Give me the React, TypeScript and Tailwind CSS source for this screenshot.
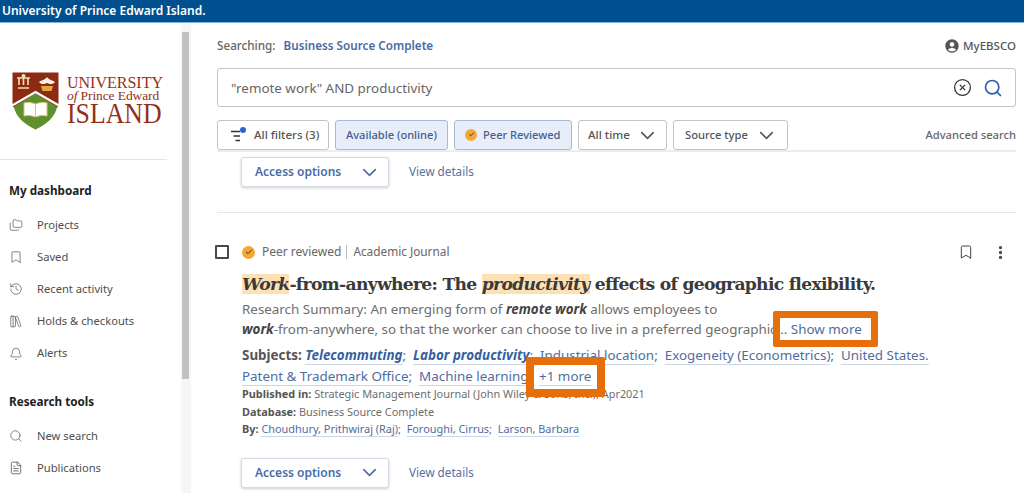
import { Bookmark, Check, ChevronDown, CircleX, EllipsisVertical, FileText, Folders, Bell, History, LibraryBig, Search } from 'lucide-react'
import { MdAccountCircle } from 'react-icons/md'
import type { ReactNode } from 'react'

const sans = { fontFamily: '"Noto Sans", sans-serif' }

function Logo() {
  return (
    <div className="flex items-center gap-[8px] pl-[12px]">
      <svg width="47" height="58" viewBox="0 0 47 58" className="shrink-0">
        <path d="M0.5 0.5H46.5V34L23.5 57.5L0.5 34Z" fill="#8c2a14" />
        <path d="M2 34.5L23.5 21.5L45 34.5C44 44 34 53 23.5 57.5C13 53 3 44 2 34.5Z" fill="#5f8f2e" />
        <path d="M0 33.5L23.5 20L47 33.5" fill="none" stroke="#fff" strokeWidth="2.2" />
        <path d="M12 31C16 30 20 30.5 23.5 32C27 30.5 31 30 35 31V44C31 43 27 43.5 23.5 45C20 43.5 16 43 12 44Z" fill="#fff" stroke="#d9c77a" strokeWidth="1" />
        <path d="M23.5 32V45" stroke="#d9c77a" />
        <path d="M5 6H18M7 6V13M11.5 6V13M16 6V13M6 16H17" stroke="#f4e3b3" strokeWidth="1.6" fill="none" />
        <circle cx="11.5" cy="4" r="2" fill="#f4e3b3" />
        <path d="M35 5C33 8 30 8 27 10C29 13 33 12 35 11C37 12 41 13 43 10C40 8 37 8 35 5Z" fill="#f7efe0" />
        <path d="M29 14H41L39.5 19H30.5Z" fill="#e0a93b" />
      </svg>
      <div className="flex flex-col items-start font-['Liberation_Serif',serif] text-[#93301c]">
        <span className="text-[16px] leading-[14px]">UNIVERSITY</span>
        <span className="text-[13.5px] leading-[12px] whitespace-nowrap tracking-[-0.1px]">
          <i>of</i> Prince Edward
        </span>
        <span className="-mt-[1px] mb-[3px] origin-top scale-y-[1.15] text-[25.8px] leading-[22px]">ISLAND</span>
      </div>
    </div>
  )
}

function NavItem({ icon, label }: { icon: ReactNode; label: string }) {
  return (
    <div className="flex h-[32.2px] items-center gap-[14px] pl-[9px] text-[11.2px] text-[#4e4e4e]">
      <span className="flex w-[14px] justify-center text-[#555]">{icon}</span>
      {label}
    </div>
  )
}

function Sidebar() {
  return (
    <aside className="flex w-[181px] shrink-0 flex-col">
      <div className="mr-[14px] h-[137px] border-b border-[#e5e5e5] pt-[49px]">
        <Logo />
      </div>
      <h3 className="mt-[22px] mb-[11px] pl-[9px] text-[11.7px] leading-[16px] font-bold text-[#222]">My dashboard</h3>
      <NavItem icon={<Folders size={16} strokeWidth={1.2} />} label="Projects" />
      <NavItem icon={<Bookmark size={14} strokeWidth={1.2} />} label="Saved" />
      <NavItem icon={<History size={14} strokeWidth={1.2} />} label="Recent activity" />
      <NavItem icon={<LibraryBig size={15} strokeWidth={1.2} />} label="Holds & checkouts" />
      <NavItem icon={<Bell size={14} strokeWidth={1.2} />} label="Alerts" />
      <h3 className="mt-[23px] mb-[11px] pl-[9px] text-[11.7px] leading-[16px] font-bold text-[#222]">Research tools</h3>
      <NavItem icon={<Search size={14} strokeWidth={1.2} />} label="New search" />
      <NavItem icon={<FileText size={14} strokeWidth={1.4} />} label="Publications" />
    </aside>
  )
}

function Scrollbar() {
  return (
    <div className="flex w-[10px] shrink-0 flex-col bg-[#f6f6f6] pl-[1px]">
      <div className="h-[9px]" />
      <div className="h-[347px] w-[7px] bg-[#c2c2c2]" />
    </div>
  )
}

function Chip({ children, active, width }: { children: ReactNode; active?: boolean; width: string }) {
  return (
    <div
      className={
        active
          ? `flex h-[30px] items-center rounded-[3px] border border-[#a9b8d4] bg-[#e8eef9] text-[11.1px] text-[#41608f] ${width}`
          : `flex h-[30px] items-center rounded-[3px] border border-[#c4c4c4] bg-white text-[#555] ${width}`
      }
    >
      {children}
    </div>
  )
}

function PeerBadge({ size }: { size: number }) {
  return (
    <span className="flex shrink-0 items-center justify-center rounded-full bg-[#f4a936] text-[#333]" style={{ width: size, height: size }}>
      <Check size={size - 5} strokeWidth={3} />
    </span>
  )
}

function AccessRow() {
  return (
    <div className="flex items-center">
      <div className="flex h-[30px] w-[148px] items-center justify-between rounded-[3px] border border-[#d5dbe6] bg-white pr-[7px] pl-[13px] text-[12px] font-semibold text-[#4a6ba5] shadow-[0_1px_3px_rgba(0,0,0,0.2)]">
        Access options
        <ChevronDown size={23} strokeWidth={1.6} />
      </div>
      <span className="ml-[20px] text-[11.7px] text-[#56719f]">View details</span>
    </div>
  )
}

function SubjectLink({ children, bold }: { children: ReactNode; bold?: boolean }) {
  return (
    <span className={bold ? 'border-b border-[#ccd5e5] font-bold text-[#35609f] italic' : 'border-b border-[#ccd5e5] text-[#4f6d9f]'}>
      {children}
    </span>
  )
}

function Result() {
  return (
    <article className="relative">
      <div className="-ml-[2px] flex items-center">
        <span className="h-[14px] w-[14px] rounded-[1px] border-2 border-[#4a4a4a]" />
        <span className="ml-[13px]">
          <PeerBadge size={13} />
        </span>
        <span className="ml-[7px] text-[12px] text-[#666]">Peer reviewed</span>
        <span className="mx-[5px] h-[14px] w-px bg-[#bbb]" />
        <span className="ml-[1px] text-[11.8px] text-[#666]">Academic Journal</span>
        <Bookmark size={16} strokeWidth={1.5} className="mr-[18px] ml-auto text-[#444]" />
        <EllipsisVertical size={17} strokeWidth={2.6} className="mr-[7px] text-[#444]" />
      </div>
      <div className="pl-[25px]">
        <h2 className="mt-[11px] font-['DejaVu_Serif',serif] text-[17.2px] leading-[24px] font-bold tracking-[-0.72px] whitespace-nowrap text-[#3a3a3a]">
          <em className="bg-[#fde0b4]">Work</em>-from-anywhere: The <em className="bg-[#fde0b4]">productivity</em> effects of geographic flexibility.
        </h2>
        <p className="mt-[3px] text-[13.4px] leading-[20px] whitespace-nowrap text-[#6e6e6e]">
          Research Summary: An emerging form of <b className="text-[#444] italic">remote work</b> allows employees to
          <br />
          <b className="text-[#444] italic">work</b>-from-anywhere, so that the worker can choose to live in a preferred geographic... <span className="text-[#4f6d9f]">Show more</span>
        </p>
        <p className="mt-[6px] text-[13.4px] leading-[21px] whitespace-nowrap text-[#4f6d9f]">
          <b className="text-[#555]">Subjects:</b> <SubjectLink bold>Telecommuting</SubjectLink>;&nbsp; <SubjectLink bold>Labor productivity</SubjectLink>;&nbsp; <SubjectLink>Industrial location</SubjectLink>;&nbsp; <SubjectLink>Exogeneity (Econometrics)</SubjectLink>;&nbsp; <SubjectLink>United States.</SubjectLink>
          <br />
          <SubjectLink>Patent &amp; Trademark Office</SubjectLink>;&nbsp; <SubjectLink>Machine learning</SubjectLink>;&nbsp; <SubjectLink>+1 more</SubjectLink>
        </p>
        <div className="-mt-[2px] text-[10.9px] leading-[17.5px] whitespace-nowrap text-[#6e6e6e]">
          <p>
            <b className="text-[#555]">Published in:</b> Strategic Management Journal (John Wiley &amp; Sons, Inc.), Apr2021
          </p>
          <p>
            <b className="text-[#555]">Database:</b> Business Source Complete
          </p>
          <p className="text-[#4f6d9f]">
            <b className="text-[#555]">By:</b> <SubjectLink>Choudhury, Prithwiraj (Raj)</SubjectLink>;&nbsp; <SubjectLink>Foroughi, Cirrus</SubjectLink>;&nbsp; <SubjectLink>Larson, Barbara</SubjectLink>
          </p>
        </div>
        <div className="mt-[20px] -ml-[1px]">
          <AccessRow />
        </div>
      </div>
      {/* orange callouts added on top of the video frame */}
      <div className="absolute top-[68px] left-[556px] h-[36px] w-[105px] rounded-[2px] border-[7px] border-[#e66f0a]" />
      <div className="absolute top-[114px] left-[309px] h-[40px] w-[79px] rounded-[2px] border-[8px] border-[#e66f0a]" />
    </article>
  )
}

function Main() {
  return (
    <main className="flex min-w-0 flex-1 flex-col pr-[8px] pl-[26px]">
      <div className="flex h-[45px] items-center justify-between text-[11.7px]">
        <div>
          <span className="font-medium text-[#666]">Searching:</span>
          <span className="ml-[8px] font-semibold text-[#4a6ba5]">Business Source Complete</span>
        </div>
        <div className="flex items-center gap-[3px] text-[11.5px] font-medium text-[#555]">
          <MdAccountCircle size={16} className="text-[#555]" />
          MyEBSCO
        </div>
      </div>
      <div className="flex h-[39px] items-center justify-between rounded-[3px] border border-[#c4c4c4] pr-[12px] pl-[13px] text-[13.4px] text-[#666]">
        <span className="pt-[1px]">"remote work" AND productivity</span>
        <div className="flex items-center gap-[11px]">
          <CircleX size={19} strokeWidth={1.6} className="text-[#333]" />
          <Search size={20} strokeWidth={2} className="text-[#2f63ad]" />
        </div>
      </div>
      <div className="mt-[13px] flex items-center gap-[6px] text-[11.5px] font-medium">
        <Chip width="w-[112px]">
          <div className="flex items-center pl-[13px]">
            <svg width="16" height="16" viewBox="0 0 16 16" className="shrink-0">
              <path d="M0 4.5H9M2.5 9H9M4.5 13.5H9" stroke="#333" strokeWidth="1.6" />
              <circle cx="12" cy="3" r="3" fill="#2f63d0" />
            </svg>
            <span className="ml-[7px]">All filters (3)</span>
          </div>
        </Chip>
        <Chip active width="w-[113px]">
          <span className="px-[10px]">Available (online)</span>
        </Chip>
        <Chip active width="w-[118px]">
          <span className="flex items-center gap-[6px] px-[10px]">
            <PeerBadge size={12} /> Peer Reviewed
          </span>
        </Chip>
        <Chip width="w-[89px]">
          <span className="flex w-full items-center justify-between pr-[7px] pl-[9px]">
            All time <ChevronDown size={23} strokeWidth={1.6} />
          </span>
        </Chip>
        <Chip width="w-[115px]">
          <span className="flex w-full items-center justify-between pr-[9px] pl-[11px] text-[11.2px]">
            Source type <ChevronDown size={23} strokeWidth={1.6} />
          </span>
        </Chip>
        <span className="ml-auto text-[11.2px] text-[#666]">Advanced search</span>
      </div>
      <div className="h-[2px] bg-[#ececec]" />
      <div className="mt-[5px] pl-[24px]">
        <AccessRow />
      </div>
      <div className="mt-[25px] mb-[30px] h-px bg-[#e6e6e6]" />
      <Result />
    </main>
  )
}

export default function App() {
  return (
    <div className="flex h-[493px] w-[1024px] flex-col overflow-hidden bg-white" style={sans}>
      <header className="flex h-[23px] shrink-0 items-center border-b border-[#7fb2d6] bg-[#00508f] pl-[2px] text-[12px] font-semibold text-white">
        University of Prince Edward Island.
      </header>
      <div className="flex min-h-0 flex-1">
        <Sidebar />
        <Scrollbar />
        <Main />
      </div>
    </div>
  )
}
